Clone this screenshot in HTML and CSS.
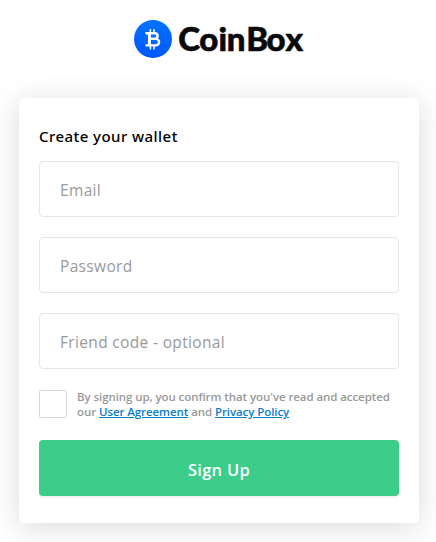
FILE: index.html
```html
<!DOCTYPE html>
<html lang="en">
<head>
<meta charset="utf-8">
<title>CoinBox</title>
<link rel="stylesheet" href="styles.css">
</head>
<body>
<header class="brand">
  <svg class="logo" width="180" height="46" viewBox="0 0 180 46" role="img" aria-label="CoinBox">
    <defs>
      <linearGradient id="coin" x1="0" y1="0" x2="0" y2="1">
        <stop offset="0" stop-color="#0073ff"/>
        <stop offset="1" stop-color="#0057ff"/>
      </linearGradient>
    </defs>
    <circle cx="20" cy="20" r="19" fill="url(#coin)"/>
    <g fill="none" stroke="#fff" stroke-width="2.4">
      <path d="M12.4 14.2H21.8a2.8 2.8 0 0 1 0 5.6H16.5M22 19.8h.8a3.3 3.3 0 0 1 0 6.6H12.4"/>
      <path d="M16.4 14.2v12.2" stroke-width="3"/>
      <path d="M17.4 10v4M21 10v4M17.4 26.4v4M21 26.4v4" stroke-width="1.5"/>
    </g>
    <text class="wordmark" x="45.2 66.2 85.6 93.8 113.2 133.6 152.4" y="32">CoinBox</text>
  </svg>
</header>
<main class="card">
  <h1 class="title">Create your wallet</h1>
  <form class="form">
    <input class="field" type="email" placeholder="Email">
    <input class="field" type="password" placeholder="Password">
    <input class="field" type="text" placeholder="Friend code - optional">
    <label class="terms">
      <input class="check" type="checkbox">
      <span class="terms-text">By signing up, you confirm that you've read and accepted<br>our <a class="link" href="#">User Agreement</a> and <a class="link" href="#">Privacy Policy</a></span>
    </label>
    <button class="submit" type="button">Sign Up</button>
  </form>
</main>
</body>
</html>
```
FILE: styles.css
```css
* { box-sizing: border-box; }
body {
  margin: 0;
  padding: 19px 17px 19px 19px;
  background: #fff;
  font-family: "Open Sans", "Noto Sans", sans-serif;
  overflow: hidden;
}
.brand { height: 79px; padding-left: 114px; }
.logo { display: block; overflow: visible; }
.wordmark {
  font: 900 33px Lato, sans-serif;
  fill: #0a0a0a;
  stroke: #0a0a0a;
  stroke-width: .6px;
}
.card {
  height: 425px;
  padding: 28px 20px 0;
  border-radius: 4px;
  background: #fff;
  box-shadow: 0 4px 30px rgba(0, 0, 0, .15);
}
.title {
  margin: 0 0 14px;
  font-family: "Noto Sans", sans-serif;
  font-size: 15px;
  font-weight: 500;
  line-height: 21px;
  letter-spacing: .44px;
  color: #000;
}
.form { display: flex; flex-direction: column; gap: 20px; }
.field {
  width: 100%;
  height: 56px;
  padding: 1px 20px 0;
  border: 1px solid #e6e6e6;
  border-radius: 4px;
  background: #fff;
  font: 400 15.5px "Open Sans", sans-serif;
  letter-spacing: .34px;
  outline: 0;
}
.field::placeholder { color: #999; opacity: 1; }
.terms { display: flex; gap: 10px; height: 31px; }
.check {
  flex: none;
  width: 28px;
  height: 28px;
  margin: 1px 0 0;
  border: 1px solid #d8d8d8;
  border-radius: 2px;
  appearance: none;
}
.terms-text {
  font-size: 11.5px;
  font-weight: 600;
  line-height: 15px;
  letter-spacing: -.08px;
  white-space: nowrap;
  color: #999;
}
.link { color: #0c7dc9; text-decoration: underline; }
.submit {
  height: 56px;
  padding: 2px 0 0;
  border: 0;
  border-radius: 4px;
  background: #3ccd8b;
  box-shadow: 0 2px 0 #f3f3f3;
  font: 600 16.5px "Open Sans", sans-serif;
  letter-spacing: .3px;
  color: #fff;
}
```
